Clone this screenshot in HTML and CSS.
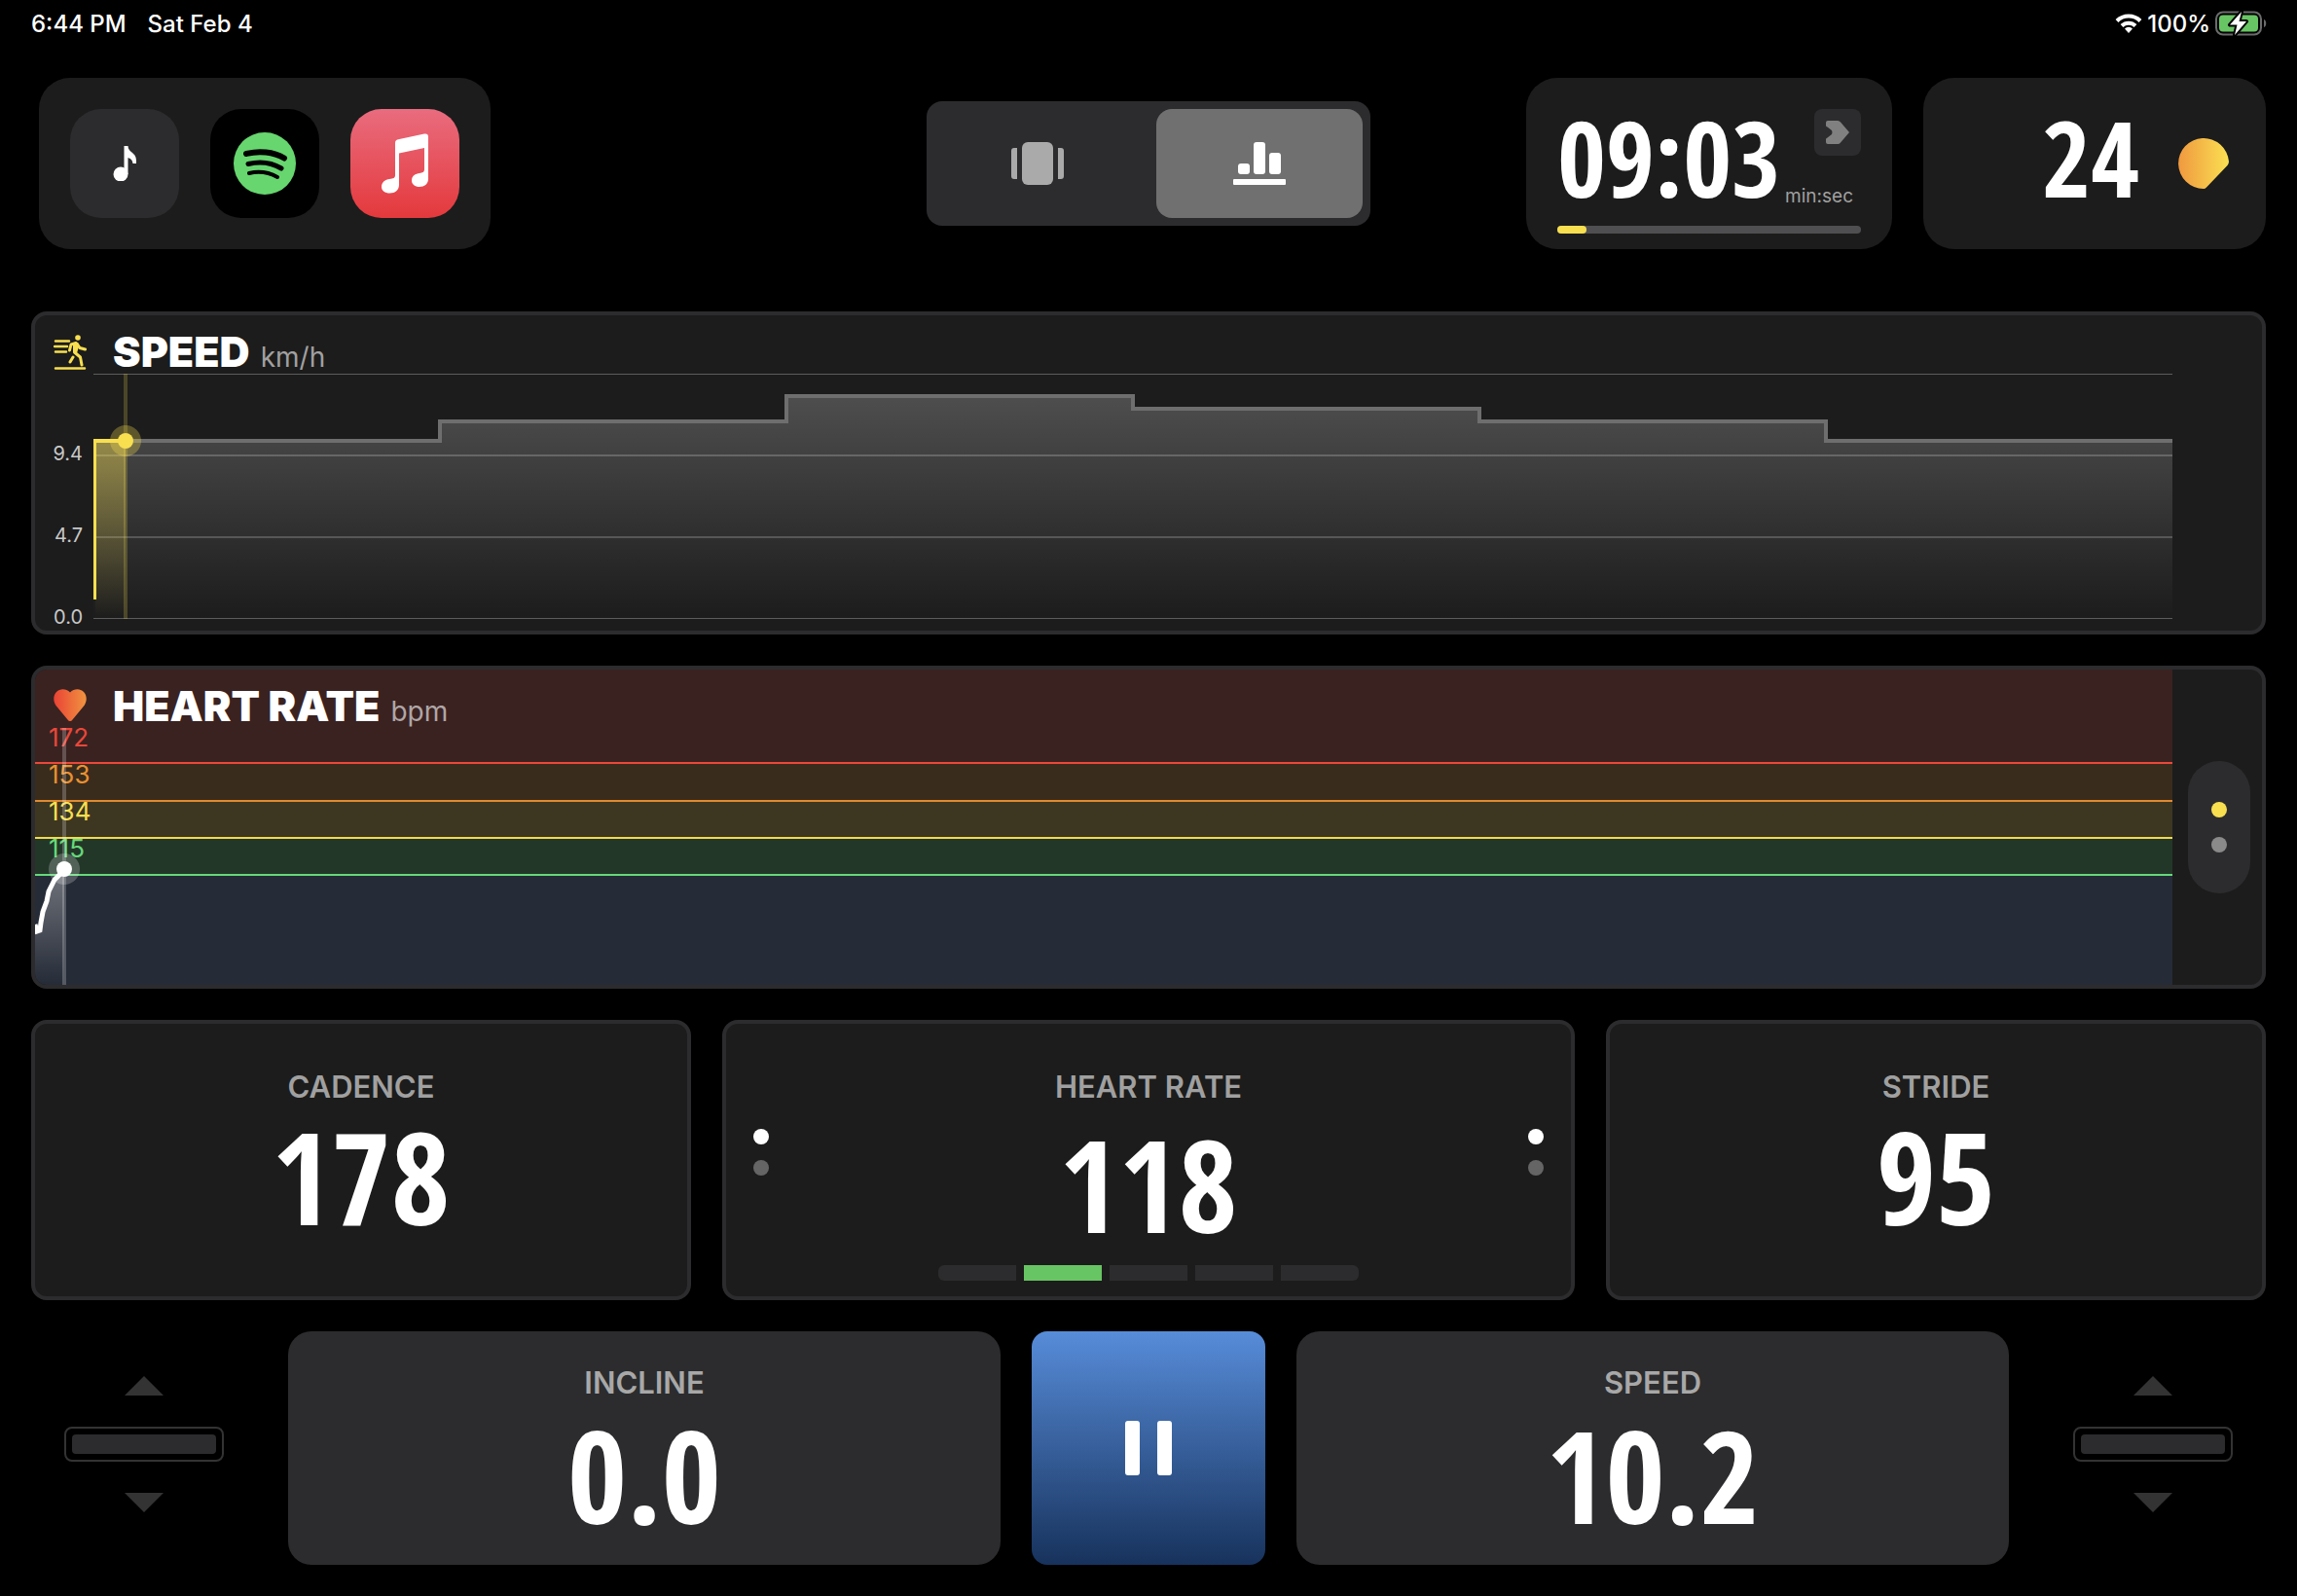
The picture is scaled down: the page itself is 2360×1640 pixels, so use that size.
FILE: index.html
```
<!DOCTYPE html>
<html lang="en">
	<head>
		<title>Treadmill - workout</title>
		<meta charset="utf-8">
		<meta name="viewport" content="width=device-width, initial-scale=1.0">
		<link rel="stylesheet" href="styles.css">
	</head>

	<body>
		<div class="status">
			<span>6:44 PM</span>
			<span>Sat Feb 4</span>
			<div class="status-right">
				<svg width="28" height="22" viewBox="0 0 28 22" fill="none" stroke="#fff" stroke-width="4">
					<path d="M2 8.500a17 17 0 0 1 24 0"/>
					<path d="M7 13.500a10 10 0 0 1 14 0"/>
					<path d="M14 21l-4-4.500a5.500 5.500 0 0 1 8 0z" fill="#fff" stroke="none"/>
				</svg>
				<span>100%</span>
				<svg width="54" height="26" viewBox="0 0 54 26">
					<rect x="1" y="1.500" width="46" height="23" rx="7" fill="none" stroke="#6b6b6b" stroke-width="2"/>
					<path d="M50 9c3 1 3 7 0 8z" fill="#6b6b6b"/>
					<rect x="4" y="4.500" width="40" height="17" rx="4" fill="#68c563"/>
					<path d="M27 1L15 14.500h7.500L20 25l12-14h-7.500z" fill="#fff" stroke="#000" stroke-width="4" paint-order="stroke" stroke-linejoin="round"/>
				</svg>
			</div>
		</div>

		<header class="topbar">
			<div class="music">
				<button class="app app-note" aria-label="Music off">
					<svg width="24" height="36" viewBox="0 0 24 36" fill="#fff">
						<circle cx="8" cy="29" r="7.500"/>
						<path d="M11.500 0h4c0 7 8.500 6 8.500 15v3h-3.500c-.5-4-2.500-5-5-6v17h-4z"/>
					</svg>
				</button>
				<button class="app app-spotify" aria-label="Spotify">
					<svg width="64" height="64" viewBox="0 0 64 64">
						<circle cx="32" cy="32" r="32" fill="#67d66f"/>
						<g fill="none" stroke="#000" stroke-linecap="round">
							<path d="M13 22c13-3.500 28-2 39 4.500" stroke-width="6"/>
							<path d="M15 32.500c12-3 24-1.500 34 4.500" stroke-width="5"/>
							<path d="M16 42c10-2.300 20-1 29 4" stroke-width="4"/>
						</g>
					</svg>
				</button>
				<button class="app app-apple" aria-label="Apple Music">
					<svg width="48" height="62" viewBox="0 0 48 62" fill="#fff">
						<path d="M14 10q0-3 3-3.700L44 .5q4-.7 4 3V47c0 5-4 8-9 8-4.500 0-8-2.500-8-6.500 0-5 4-7 8-7.500 3-.5 5-1 5-4V15L18 20.500V53c0 5-4 8.500-9.500 8.500C3.500 61.500 0 59 0 55c0-5 4-7.500 8-8 4-.5 6-1 6-4z"/>
					</svg>
				</button>
			</div>

			<div class="views">
				<button class="view" aria-label="Cards">
					<svg width="54" height="44" viewBox="0 0 54 44" fill="#aaa">
						<path d="M3 6h3v32H3a3 3 0 0 1-3-3V9a3 3 0 0 1 3-3zM48 6h3a3 3 0 0 1 3 3v26a3 3 0 0 1-3 3h-3z"/>
						<rect x="11" width="32" height="44" rx="6"/>
					</svg>
				</button>
				<button class="view view-on" aria-label="Charts">
					<svg width="54" height="44" viewBox="0 0 54 44" fill="#fff">
						<rect x="5" y="22" width="12" height="11" rx="3"/>
						<rect x="21" width="12" height="33" rx="3"/>
						<rect x="37" y="11" width="12" height="22" rx="3"/>
						<rect y="38" width="54" height="6" rx="1"/>
					</svg>
				</button>
			</div>

			<div class="totals">
				<div class="timer">
					<div class="timer-row">
						<span class="num num-small">09:03</span>
						<div class="timer-side">
							<button class="next" aria-label="Next interval">
								<svg width="24" height="24" viewBox="0 0 24 24" fill="#808080">
									<path d="M2 0h10q2 0 3 1.500L24 12l-9 10.500Q14 24 12 24H2q-2 0-2-2v-3q0-1 1.500-1.500L6 14q1-2 0-4L1.500 6.500Q0 6 0 5V2q0-2 2-2z"/>
								</svg>
							</button>
							<span class="timer-unit">min:sec</span>
						</div>
					</div>
					<div class="bar"><div class="bar-fill" style="width: 9.600%"></div></div>
				</div>
				<div class="coins">
					<span class="num num-small">24</span>
					<svg width="52" height="52" viewBox="0 0 52 52">
						<defs>
							<linearGradient id="coin"><stop offset="0" stop-color="#f0993f"/><stop offset="1" stop-color="#fae052"/></linearGradient>
						</defs>
						<path d="M26 52A26 26 0 1 1 52 24q0 2-1.500 4L29 50.500Q27.500 52 26 52z" fill="url(#coin)"/>
					</svg>
				</div>
			</div>
		</header>

		<main>
			<section class="chart">
				<div class="chart-head">
					<svg class="chart-icon" width="34" height="36" viewBox="0 0 34 36" fill="none" stroke="#f8df50" stroke-width="2.500" stroke-linecap="round" stroke-linejoin="round">
						<path d="M2 34.500h30M2 6.500h14M1 12h13M2 17.500h11"/>
						<circle cx="25" cy="3" r="2.800" fill="#f8df50" stroke="none"/>
						<path d="M16.500 16l1.500-6 5-1.500L21.500 18l6 5 1.500 8M24 9l3 4.500 5.500 1.500M20 23l-3 5" stroke-width="3"/>
						<path d="M20 8h5l1 4-2 7-4-1z" fill="#f8df50" stroke="none"/>
					</svg>
					<h2>SPEED</h2>
					<span class="unit">km/h</span>
				</div>
				<div class="speed-body">
					<div class="axis"><span>9.4</span><span>4.7</span><span>0.0</span></div>
					<svg class="speed-plot" height="252" viewBox="0 0 2136 252" preserveAspectRatio="none">
						<defs>
							<linearGradient id="plan" x2="0" y2="1"><stop offset="0" stop-color="#fff" stop-opacity=".22"/><stop offset="1" stop-color="#fff" stop-opacity="0"/></linearGradient>
							<linearGradient id="done" x2="0" y2="1"><stop offset="0" stop-color="#f8df50" stop-opacity=".45"/><stop offset="1" stop-color="#f8df50" stop-opacity="0"/></linearGradient>
						</defs>
						<path d="M0 252V69H356V49H712V23H1068V36H1424V49H1780V69H2136V252z" fill="url(#plan)"/>
						<path d="M0 0H2136V1H0zM0 251H2136V252H0z" fill="#5c5c5c"/>
						<path d="M0 83H2136V85H0zM0 167H2136V169H0z" fill="#fff" fill-opacity=".2"/>
						<path d="M0 69H356V49H712V23H1068V36H1424V49H1780V69H2136" fill="none" stroke="#6e6e6e" stroke-width="4"/>
						<path d="M2 69H33V251H2z" fill="url(#done)"/>
						<path d="M33 0V252" stroke="#f8df50" stroke-opacity=".22" stroke-width="4"/>
						<path d="M1 232V69H33" fill="none" stroke="#f8df50" stroke-width="4"/>
						<circle cx="33" cy="69" r="16" fill="#f8df50" fill-opacity=".3"/>
						<circle cx="33" cy="69" r="8" fill="#f8df50"/>
					</svg>
				</div>
			</section>

			<section class="chart chart-hr">
				<div class="hr-plot">
					<svg class="hr-lines" height="324" viewBox="0 0 2196 324" preserveAspectRatio="none">
						<defs>
							<linearGradient id="beats" x2="0" y2="1"><stop offset="0" stop-color="#fff" stop-opacity=".35"/><stop offset="1" stop-color="#fff" stop-opacity="0"/></linearGradient>
						</defs>
						<path d="M0 0H2196V96H0z" fill="#3a2221"/>
						<path d="M0 96H2196V135H0z" fill="#3a2c1d"/>
						<path d="M0 135H2196V173H0z" fill="#3d3721"/>
						<path d="M0 173H2196V211H0z" fill="#233729"/>
						<path d="M0 211H2196V324H0z" fill="#252b37"/>
						<g fill="none" stroke-width="2">
							<path d="M0 96H2196" stroke="#e9483a"/>
							<path d="M0 135H2196" stroke="#e08a30"/>
							<path d="M0 173H2196" stroke="#f2da4c"/>
							<path d="M0 211H2196" stroke="#66d97a"/>
						</g>
						<path d="M0 270H5L8 248L17 224L30 206V324H0z" fill="url(#beats)"/>
						<path d="M0 262L2 269L5 268L6 260L8 249L12 238L14 228L18 220L20 216L30 206" fill="none" stroke="#fff" stroke-width="5"/>
					</svg>
					<div class="zones">
						<span class="zone-red">172</span>
						<span class="zone-orange">153</span>
						<span class="zone-yellow">134</span>
						<span class="zone-green">115</span>
					</div>
					<svg class="hr-cursor" width="32" height="264" viewBox="0 0 32 264" fill="#fff">
						<path d="M14 0h4v264h-4z" fill-opacity=".22"/>
						<circle cx="16" cy="145" r="16" fill-opacity=".22"/>
						<circle cx="16" cy="145" r="8"/>
					</svg>
					<div class="chart-head">
						<svg class="chart-icon" width="34" height="34" viewBox="0 0 34 34">
							<defs>
								<linearGradient id="heart"><stop offset="0" stop-color="#ea4335"/><stop offset="1" stop-color="#f09440"/></linearGradient>
							</defs>
							<path d="M17 33Q15.500 33 14.500 31.500L2.500 17C-1 12 0 6 3 3 7-1 13-.5 17 3.500 21-.5 27-1 31 3c3 3 4 9 .5 14l-12 14.500Q18.500 33 17 33z" fill="url(#heart)"/>
						</svg>
						<h2>HEART RATE</h2>
						<span class="unit">bpm</span>
					</div>
				</div>
				<div class="pager">
					<button class="dot dot-yellow" aria-label="Page 1"></button>
					<button class="dot dot-grey" aria-label="Page 2"></button>
				</div>
			</section>

			<section class="stats">
				<div class="stat">
					<h3>CADENCE</h3>
					<span class="num">178</span>
				</div>
				<div class="stat stat-hr">
					<div class="dots"><i class="dot"></i><i class="dot dot-dim"></i></div>
					<div class="stat-mid">
						<h3>HEART RATE</h3>
						<span class="num">118</span>
						<div class="levels"><i></i><i class="level-on"></i><i></i><i></i><i></i></div>
					</div>
					<div class="dots"><i class="dot"></i><i class="dot dot-dim"></i></div>
				</div>
				<div class="stat">
					<h3>STRIDE</h3>
					<span class="num">95</span>
				</div>
			</section>

			<section class="controls">
				<div class="lever">
					<button aria-label="Incline up"><svg width="40" height="20" viewBox="0 0 40 20" fill="#333"><path d="M20 0l20 20H0z"/></svg></button>
					<div class="lever-box"><div class="lever-fill"></div></div>
					<button aria-label="Incline down"><svg width="40" height="20" viewBox="0 0 40 20" fill="#333"><path d="M0 0h40L20 20z"/></svg></button>
				</div>
				<button class="setting">
					<span class="label">INCLINE</span>
					<span class="num">0.0</span>
				</button>
				<button class="pause" aria-label="Pause">
					<svg width="48" height="56" viewBox="0 0 48 56" fill="#fff"><rect width="15" height="56" rx="3"/><rect x="33" width="15" height="56" rx="3"/></svg>
				</button>
				<button class="setting">
					<span class="label">SPEED</span>
					<span class="num">10.2</span>
				</button>
				<div class="lever">
					<button aria-label="Speed up"><svg width="40" height="20" viewBox="0 0 40 20" fill="#333"><path d="M20 0l20 20H0z"/></svg></button>
					<div class="lever-box"><div class="lever-fill"></div></div>
					<button aria-label="Speed down"><svg width="40" height="20" viewBox="0 0 40 20" fill="#333"><path d="M0 0h40L20 20z"/></svg></button>
				</div>
			</section>
		</main>
	</body>
</html>
```
FILE: styles.css
```
* {
	box-sizing: border-box;
}

body {
	background: #000;
	color: #fff;
	margin: 0;
	font-family: Inter, "Liberation Sans", sans-serif;
}

button {
	background: none;
	border: 0;
	padding: 0;
	color: inherit;
	font-family: inherit;
	cursor: pointer;
}

svg {
	display: block;
}

h2, h3 {
	margin: 0;
}

/* big condensed readouts */
.num {
	font-family: "Noto Sans ExtraCondensed", "Open Sans Condensed", "Noto Sans Condensed", "Roboto Condensed", sans-serif;
	font-size: 132px;
	font-weight: 900;
	line-height: 104px;
}

.num-small {
	font-size: 108px;
	line-height: 88px;
}

.status {
	display: flex;
	align-items: center;
	gap: 22px;
	height: 48px;
	padding: 0 30px 0 32px;
	font-size: 24px;
	font-weight: 500;
}

.status-right {
	display: flex;
	align-items: center;
	gap: 5px;
	margin-left: auto;
}

/* top row */
.topbar {
	display: grid;
	grid-template-columns: 1fr auto 1fr;
	align-items: center;
	padding: 32px 32px 0;
}

.music {
	display: flex;
	gap: 32px;
	margin-left: 8px;
	padding: 32px;
	border-radius: 32px;
	background: #1c1c1c;
	justify-self: start;
}

.app {
	display: flex;
	align-items: center;
	justify-content: center;
	width: 112px;
	height: 112px;
	border-radius: 32px;
}

.app-note {
	background: #2c2c2e;
}

.app-spotify {
	background: #000;
}

.app-apple {
	background: linear-gradient(#e96c7e, #e4393c);
}

.views {
	display: flex;
	gap: 16px;
	padding: 8px;
	border-radius: 16px;
	background: #2c2c2e;
}

.view {
	display: flex;
	align-items: center;
	justify-content: center;
	width: 212px;
	height: 112px;
	border-radius: 16px;
}

.view-on {
	background: #707070;
}

.totals {
	display: flex;
	gap: 32px;
	justify-self: end;
}

.timer {
	width: 376px;
	height: 176px;
	padding: 32px 32px 16px;
	border-radius: 32px;
	background: #1c1c1c;
}

.timer-row {
	display: flex;
	justify-content: space-between;
	height: 120px;
}

.timer-row .num {
	padding-top: 6px;
}

.timer-side {
	display: flex;
	flex-direction: column;
	align-items: flex-end;
}

.next {
	display: flex;
	align-items: center;
	justify-content: center;
	width: 48px;
	height: 48px;
	border-radius: 8px;
	background: #2c2c2e;
}

.timer-unit {
	margin-top: 30px;
	padding-right: 8px;
	font-size: 19px;
	line-height: 24px;
	color: #a0a0a0;
}

.bar {
	height: 8px;
	border-radius: 4px;
	background: #4f4f51;
}

.bar-fill {
	height: 8px;
	border-radius: 4px;
	background: #f8df50;
}

.coins {
	display: flex;
	align-items: center;
	justify-content: flex-end;
	gap: 40px;
	width: 352px;
	height: 176px;
	padding-right: 38px;
	border-radius: 32px;
	background: #1c1c1c;
}

.coins .num {
	padding-bottom: 12px;
}

main {
	display: flex;
	flex-direction: column;
	gap: 32px;
	padding: 64px 32px 32px;
}

/* charts */
.chart {
	border: 4px solid #2c2c2e;
	border-radius: 16px;
	background: #1c1c1c;
	overflow: hidden;
	height: 332px;
}

.chart-head {
	display: flex;
	align-items: baseline;
	height: 60px;
	padding: 12px 0 0 19px;
}

.chart-icon {
	align-self: flex-start;
	margin: 8px 27px 0 0;
}

.chart h2 {
	font-size: 43px;
	font-weight: 900;
	line-height: 50px;
}

.unit {
	margin-left: 11px;
	font-size: 28px;
	color: #a0a0a0;
}

.speed-body {
	display: grid;
	grid-template-columns: 60px 1fr 92px;
}

.axis {
	display: flex;
	flex-direction: column;
	justify-content: space-between;
	height: 262px;
	padding: 70px 11px 0 0;
	font-size: 20px;
	line-height: 24px;
	text-align: right;
	color: #c8c8c8;
}

.speed-plot {
	width: 100%;
}

.chart-hr {
	display: flex;
	align-items: center;
	gap: 16px;
	padding-right: 12px;
}

.hr-plot {
	position: relative;
	flex: 1;
	height: 324px;
}

.hr-lines {
	position: absolute;
	width: 100%;
}

.hr-plot .chart-head {
	position: relative;
}

.hr-plot .unit {
	color: #b0a6a6;
}

.hr-cursor {
	position: absolute;
	top: 60px;
	left: 14px;
}

.zones {
	position: absolute;
	top: 51px;
	left: 14px;
	display: flex;
	flex-direction: column;
	font-size: 26px;
	line-height: 38px;
}

.zone-red { color: #e9483a; }
.zone-orange { color: #ea9131; }
.zone-yellow { color: #f8df50; }
.zone-green { color: #66d97a; }

.pager {
	display: flex;
	flex-direction: column;
	align-items: center;
	justify-content: center;
	gap: 20px;
	width: 64px;
	height: 136px;
	border-radius: 32px;
	background: #2c2c2e;
}

.dot {
	width: 16px;
	height: 16px;
	border-radius: 50%;
	background: #fff;
}

.dot-yellow { background: #f8df50; }
.dot-grey { background: #8a8a8a; }
.dot-dim { background: #656565; }

/* stat cards */
.stats {
	display: grid;
	grid-template-columns: 678fr 876fr 678fr;
	gap: 32px;
}

.stat {
	display: flex;
	flex-direction: column;
	align-items: center;
	height: 288px;
	padding-top: 45px;
	border: 4px solid #2c2c2e;
	border-radius: 16px;
	background: #1c1c1c;
}

.stat h3, .label {
	font-size: 31px;
	font-weight: 600;
	line-height: 40px;
	color: #a0a0a0;
}

.stat .num {
	margin-top: 19px;
}

.stat-hr {
	flex-direction: row;
	align-items: flex-start;
	justify-content: space-between;
	padding: 45px 28px 0;
}

.stat-mid {
	display: flex;
	flex-direction: column;
	align-items: center;
}

.stat-mid .num {
	margin-top: 27px;
}

.dots {
	display: flex;
	flex-direction: column;
	gap: 16px;
	padding-top: 63px;
}

.levels {
	display: flex;
	gap: 8px;
	margin-top: 32px;
	border-radius: 6px;
	overflow: hidden;
}

.levels i {
	width: 80px;
	height: 16px;
	background: #2c2c2e;
}

.levels .level-on {
	background: #68c563;
}

/* bottom row */
.controls {
	display: grid;
	grid-template-columns: 232px 1fr 240px 1fr 232px;
	gap: 32px;
	height: 240px;
}

.lever {
	display: flex;
	flex-direction: column;
	align-items: center;
	justify-content: center;
	gap: 32px;
	padding-bottom: 8px;
}

.lever-box {
	width: 164px;
	height: 36px;
	padding: 6px;
	border: 2px solid #333;
	border-radius: 8px;
}

.lever-fill {
	height: 20px;
	border-radius: 4px;
	background: #2c2c2e;
}

.setting {
	display: flex;
	flex-direction: column;
	align-items: center;
	gap: 22px;
	padding-top: 33px;
	border-radius: 24px;
	background: #2c2c2e;
}

.label {
	color: #a8a8a8;
}

.pause {
	display: flex;
	align-items: center;
	justify-content: center;
	border-radius: 16px;
	background: linear-gradient(#578cd9, #17325c);
}
```
